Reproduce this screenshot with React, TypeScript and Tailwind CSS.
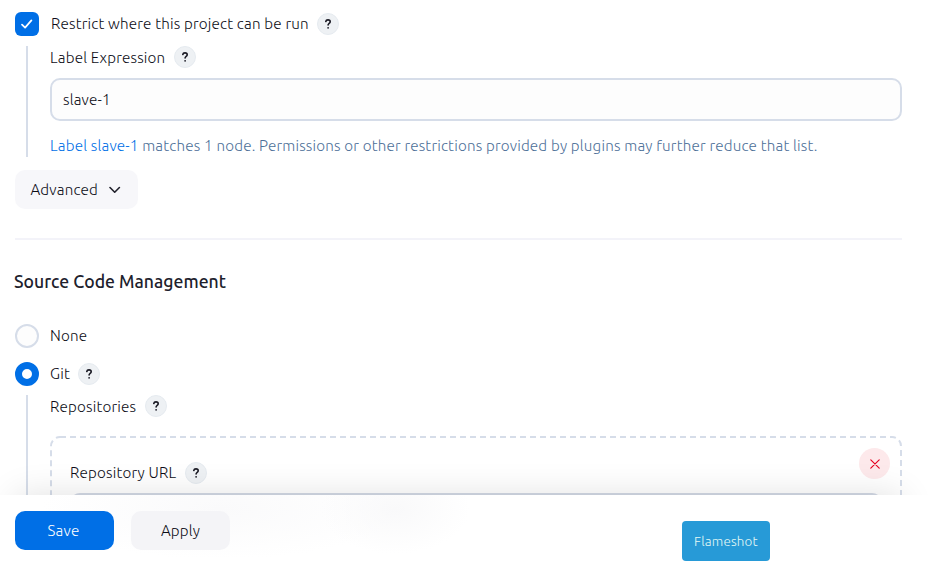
import React from "react";

function Help() {
  return (
    <span className="flex size-[22px] shrink-0 items-center justify-center rounded-full border border-[#e6ebf0] bg-[#eef1f4]">
      <svg width="8" height="10" viewBox="0 0 8 10" fill="none" stroke="#1a1a24" strokeWidth="1.6" strokeLinecap="round">
        <path d="M1.8 2.5C2 1.4 2.9 .9 4 .9c1.3 0 2.2.7 2.2 1.8 0 1.6-2.1 1.6-2.1 3.3" />
        <path d="M4.1 8.8v.05" strokeWidth="1.8" />
      </svg>
    </span>
  );
}

export default function App() {
  return (
    <div className="flex h-[562px] w-[950px] flex-col overflow-hidden bg-white font-['Ubuntu','Noto_Sans',sans-serif] text-[15.2px] leading-5 font-light tracking-[0.18px] text-[#0c0c16]">
      <main className="h-[495px] shrink-0 overflow-hidden pr-12 pl-[15px] whitespace-nowrap">
        <div className="mt-3 flex h-6 items-center">
          <span className="flex size-6 items-center justify-center rounded-md bg-[#006fe6]">
            <svg width="12" height="10" viewBox="0 0 12 10" fill="none" stroke="white" strokeWidth="1.7" strokeLinecap="round" strokeLinejoin="round">
              <path d="M1 5.6 4.1 8.6 10.4 1.4" />
            </svg>
          </span>
          <span className="ml-3 w-[266px]">Restrict where this project can be run</span>
          <Help />
        </div>

        <div className="mt-2.5 ml-[11px] h-[111px] border-l-2 border-[#d6dde9] pl-[22px]">
          <div className="flex h-[23px] items-center">
            <span className="w-[124px]">Label Expression</span>
            <span className="-mt-px">
              <Help />
            </span>
          </div>
          <div className="mt-[9px] flex h-[43px] items-center rounded-[10px] border-2 border-[#d6dde9] bg-[#fdfdfd] px-[11px]">slave-1</div>
          <p className="mt-[15px] text-[#4d6f98]">
            <a className="text-[#006fe6]">Label slave-1</a> matches 1 node. Permissions or other restrictions provided by plugins may further reduce that list.
          </p>
        </div>

        <button className="mt-[13px] flex h-[39px] w-[123px] items-center rounded-[10px] bg-[#f7f7fa] pl-[15.5px]">
          <span className="w-[78.5px] text-left">Advanced</span>
          <svg width="12" height="8" viewBox="0 0 12 8" fill="none" stroke="#20202b" strokeWidth="1.6" strokeLinecap="round" strokeLinejoin="round">
            <path d="M1 1.5 5.7 6.2 10.4 1.5" />
          </svg>
        </button>

        <div className="mt-[29px] h-0.5 bg-[#f3f3f9]" />
        <h2 className="mt-[30px] -ml-px h-[23px] text-[17.6px] leading-6 font-medium tracking-[0.02px] text-[#20202b]">Source Code Management</h2>

        <div className="mt-[31px] flex h-6 items-center">
          <span className="size-6 rounded-full border-2 border-[#d6dde9] bg-[#fdfdfd]" />
          <span className="ml-[11px]">None</span>
        </div>
        <div className="mt-3.5 flex h-6 items-center">
          <span className="size-6 rounded-full border-[7px] border-[#006fe6] bg-white" />
          <span className="ml-[11px] w-7">Git</span>
          <Help />
        </div>

        <div className="mt-[9px] ml-[11px] h-[130px] border-l-2 border-[#d6dde9] pl-[22px]">
          <div className="flex h-[23px] items-center">
            <span className="w-[95px]">Repositories</span>
            <span className="-mt-px">
              <Help />
            </span>
          </div>
          <div className="relative mt-[18px] h-[130px] rounded-[10px] pt-[26px] pl-5">
            <svg className="absolute inset-0" width="852" height="130" fill="none">
              <rect x="1" y="1" width="850" height="140" rx="9" stroke="#d6dde9" strokeWidth="2" strokeDasharray="6 4" />
            </svg>
            <div className="flex h-[22px] items-center">
              <span className="w-[115px]">Repository URL</span>
              <Help />
            </div>
            <div className="mt-[9px] mr-5 h-[43px] rounded-[10px] border-2 border-[#d3d9e5] bg-[#fdfdfd]" />
            <button className="absolute top-3 right-3 flex size-[31px] items-center justify-center rounded-full bg-[#fde9eb]">
              <svg width="10" height="10" viewBox="0 0 10 10" stroke="#e6001f" strokeWidth="1.15" strokeLinecap="round">
                <path d="M.8.8 9.2 9.2M9.2.8.8 9.2" />
              </svg>
            </button>
          </div>
        </div>
      </main>

      <footer className="relative h-[67px] shrink-0 px-[15px]">
        <div className="absolute inset-y-0 right-12 left-[15px] shadow-[0_0_35px_rgba(0,0,0,0.12)]" />
        <div className="absolute inset-0 bg-white bg-[radial-gradient(ellipse_75px_45px_at_395px_14px,#f9f9fa,transparent),radial-gradient(ellipse_180px_50px_at_220px_14px,#fafafb,transparent)]" />
        <div className="relative flex h-full items-start gap-[17px] pt-4">
          <button className="h-[39px] w-[99px] rounded-[10px] bg-[#006fe6] pr-0.5 text-white">Save</button>
          <button className="h-[39px] w-[99px] rounded-[10px] bg-[#f4f4f7]">Apply</button>
        </div>
        <div className="absolute top-[26px] left-[682px] flex h-10 w-[88px] items-center justify-center rounded bg-[#279ad7] pt-px text-[13.4px] text-[#e3f8f4]">Flameshot</div>
      </footer>
    </div>
  );
}
